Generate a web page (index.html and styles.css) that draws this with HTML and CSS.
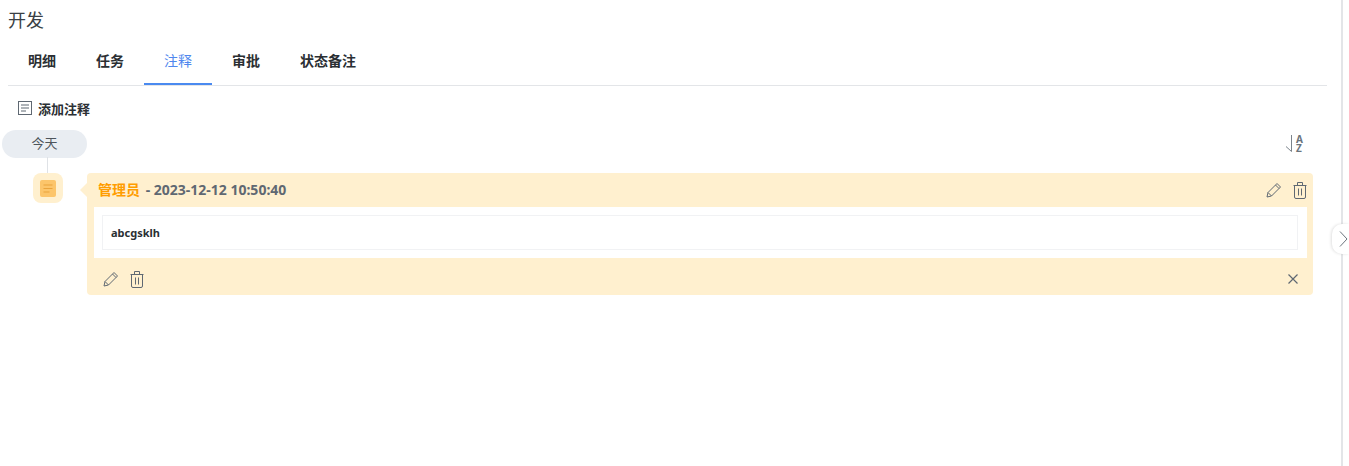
FILE: index.html
```html
<!DOCTYPE html>
<html>
<head>
    <meta charset="UTF-8">
    <title>开发</title>
    <link rel="stylesheet" href="styles.css">
</head>
<body>
    <div class="page">
        <div class="detail">
            <h1 class="title">开发</h1>
            <div class="tabs">
                <div class="tab">明细</div>
                <div class="tab">任务</div>
                <div class="tab active">注释</div>
                <div class="tab">审批</div>
                <div class="tab">状态备注</div>
            </div>
            <div class="add-note">
                <svg class="add-icon" width="14" height="14" viewBox="0 0 14 14" fill="none" stroke="#5f6872" stroke-width="1"><rect x="0.5" y="0.5" width="13" height="13"/><path d="M3 4h8M3 7h8M3 10h5"/></svg>
                <span>添加注释</span>
            </div>
            <div class="day-row">
                <div class="day-pill">今天</div>
                <div class="sort-icon">
                    <svg width="8" height="18" viewBox="0 0 8 18" fill="none"><path d="M6.500 0v16.500L1 11.500" stroke="#7b838b" stroke-width="1"/></svg>
                    <div class="sort-letters"><span>A</span><span>Z</span></div>
                </div>
            </div>
            <div class="note-row">
                <div class="note-side">
                    <div class="note-link"></div>
                    <div class="note-badge">
                        <svg width="16" height="17" viewBox="0 0 16 17"><rect width="16" height="17" rx="2" fill="#fcc56b"/><path d="M3.500 5h9M3.500 8.500h9M3.500 12h6" stroke="#e9a33c" stroke-width="1" fill="none"/></svg>
                    </div>
                </div>
                <div class="note-card">
                    <div class="note-head">
                        <div class="note-meta"><span class="note-author">管理员</span> - 2023-12-12 10:50:40</div>
                        <div class="note-actions">
                            <svg width="16" height="16" viewBox="0 0 16 16" fill="none" stroke="#5f6872" stroke-width="1"><path d="M1 15l1-4.500L11 1.500l3.500 3.500-9 9zM2 10.500L5.500 14M9.500 3l3.500 3.500"/></svg>
                            <svg width="14" height="17" viewBox="0 0 14 17" fill="none" stroke="#5f6872" stroke-width="1"><path d="M0.500 3.500h13M4.500 3.500V0.500h5v3M1.500 3.500v11.500a1.500 1.500 0 0 0 1.500 1.500h8a1.500 1.500 0 0 0 1.500-1.500V3.500M5.500 6.500v7M8.500 6.500v7"/></svg>
                        </div>
                    </div>
                    <div class="note-body">
                        <div class="note-text">abcgsklh</div>
                    </div>
                    <div class="note-foot">
                        <div class="note-actions">
                            <svg width="16" height="16" viewBox="0 0 16 16" fill="none" stroke="#5f6872" stroke-width="1"><path d="M1 15l1-4.500L11 1.500l3.500 3.500-9 9zM2 10.500L5.500 14M9.500 3l3.500 3.500"/></svg>
                            <svg width="14" height="17" viewBox="0 0 14 17" fill="none" stroke="#5f6872" stroke-width="1"><path d="M0.500 3.500h13M4.500 3.500V0.500h5v3M1.500 3.500v11.500a1.500 1.500 0 0 0 1.500 1.500h8a1.500 1.500 0 0 0 1.500-1.500V3.500M5.500 6.500v7M8.500 6.500v7"/></svg>
                        </div>
                        <svg width="10" height="10" viewBox="0 0 10 10" fill="none" stroke="#5f6872" stroke-width="1.2"><path d="M0.500 0.500l9 9M9.500 0.500l-9 9"/></svg>
                    </div>
                </div>
            </div>
        </div>
        <div class="side-toggle">
            <svg width="9" height="16" viewBox="0 0 9 16" fill="none" stroke="#6b747d" stroke-width="1"><path d="M1 0.500L8 8l-7 7.500"/></svg>
        </div>
    </div>
</body>
</html>
```

FILE: styles.css
```css
html, body {
    margin: 0;
    padding: 0;
    background: #fff;
}

body {
    font-family: "Noto Sans", "Noto Sans CJK SC", sans-serif;
    color: #2b2f33;
    overflow: hidden;
}

.page {
    position: relative;
    height: 466px;
    width: 1341px;
    border-right: 2px solid #e3e5e8;
}

.detail {
    padding: 0 28px 0 0;
}

.title {
    margin: 0;
    padding: 8px 0 0 8px;
    height: 32px;
    box-sizing: border-box;
    font-size: 18px;
    line-height: 24px;
    font-weight: 400;
    color: #3a3f45;
}

.tabs {
    display: flex;
    margin: 8px -14px 0 8px;
    height: 46px;
    border-bottom: 1px solid #e3e5e8;
    box-sizing: border-box;
}

.tab {
    padding: 0 20px;
    line-height: 41px;
    font-size: 14px;
    font-weight: 700;
    color: #2b2f33;
}

.tab.active {
    color: #4f87ee;
    font-weight: 400;
    border-bottom: 2px solid #4a8af0;
    height: 45px;
    box-sizing: border-box;
}

.add-note {
    display: flex;
    align-items: center;
    gap: 6px;
    margin: 13px 0 0 18px;
    height: 18px;
    font-size: 13px;
    font-weight: 700;
}

.day-row {
    display: flex;
    justify-content: space-between;
    align-items: flex-start;
    margin-top: 13px;
    padding-left: 2px;
}

.day-pill {
    width: 85px;
    height: 28px;
    border-radius: 14px;
    background: #e9edf2;
    text-align: center;
    line-height: 27px;
    font-size: 13px;
    color: #4d545b;
}

.sort-icon {
    display: flex;
    gap: 3px;
    margin: 5px 10px 0 0;
}

.sort-letters {
    display: flex;
    flex-direction: column;
    font-size: 10px;
    line-height: 9px;
    font-weight: 700;
    color: #6b747d;
}

.note-row {
    display: flex;
    margin-top: -1px;
}

.note-side {
    position: relative;
    width: 87px;
    flex: none;
    padding-top: 16px;
}

.note-link {
    position: absolute;
    left: 47px;
    top: 0;
    width: 1px;
    height: 16px;
    background: #dfe2e6;
}

.note-badge {
    display: flex;
    align-items: center;
    justify-content: center;
    width: 30px;
    height: 30px;
    margin-left: 33px;
    border-radius: 8px;
    background: #fff0cf;
}

.note-card {
    position: relative;
    flex: 1;
    margin-top: 16px;
    border-radius: 4px;
    background: #fff0cf;
}

.note-card::before {
    content: "";
    position: absolute;
    left: -7px;
    top: 10px;
    border-top: 7px solid transparent;
    border-bottom: 7px solid transparent;
    border-right: 7px solid #fff0cf;
}

.note-head {
    display: flex;
    justify-content: space-between;
    align-items: center;
    height: 34px;
    padding: 0 6px 0 11px;
}

.note-meta {
    margin-top: -2px;
    font-size: 14px;
    font-weight: 700;
    color: #5f6872;
}

.note-author {
    margin-right: 2px;
    color: #ff9d00;
}

.note-actions {
    display: flex;
    align-items: center;
    gap: 11px;
}

.note-body {
    margin: 0 6px 0 7px;
    padding: 8px 9px 8px 8px;
    background: #fff;
}

.note-text {
    height: 35px;
    box-sizing: border-box;
    padding-left: 8px;
    border: 1px solid #f1f2f4;
    line-height: 33px;
    font-size: 11px;
    font-weight: 700;
    color: #2b2f33;
}

.note-foot {
    display: flex;
    justify-content: space-between;
    align-items: center;
    height: 37px;
    padding: 5px 15px 0 16px;
    box-sizing: border-box;
}

.side-toggle {
    position: absolute;
    right: -8px;
    top: 224px;
    display: flex;
    align-items: center;
    justify-content: flex-end;
    width: 17px;
    height: 30px;
    padding-right: 1px;
    box-sizing: border-box;
    border-radius: 10px 0 0 10px;
    background: #fff;
    box-shadow: -1px 0 3px rgba(0, 0, 0, 0.12);
}
```
